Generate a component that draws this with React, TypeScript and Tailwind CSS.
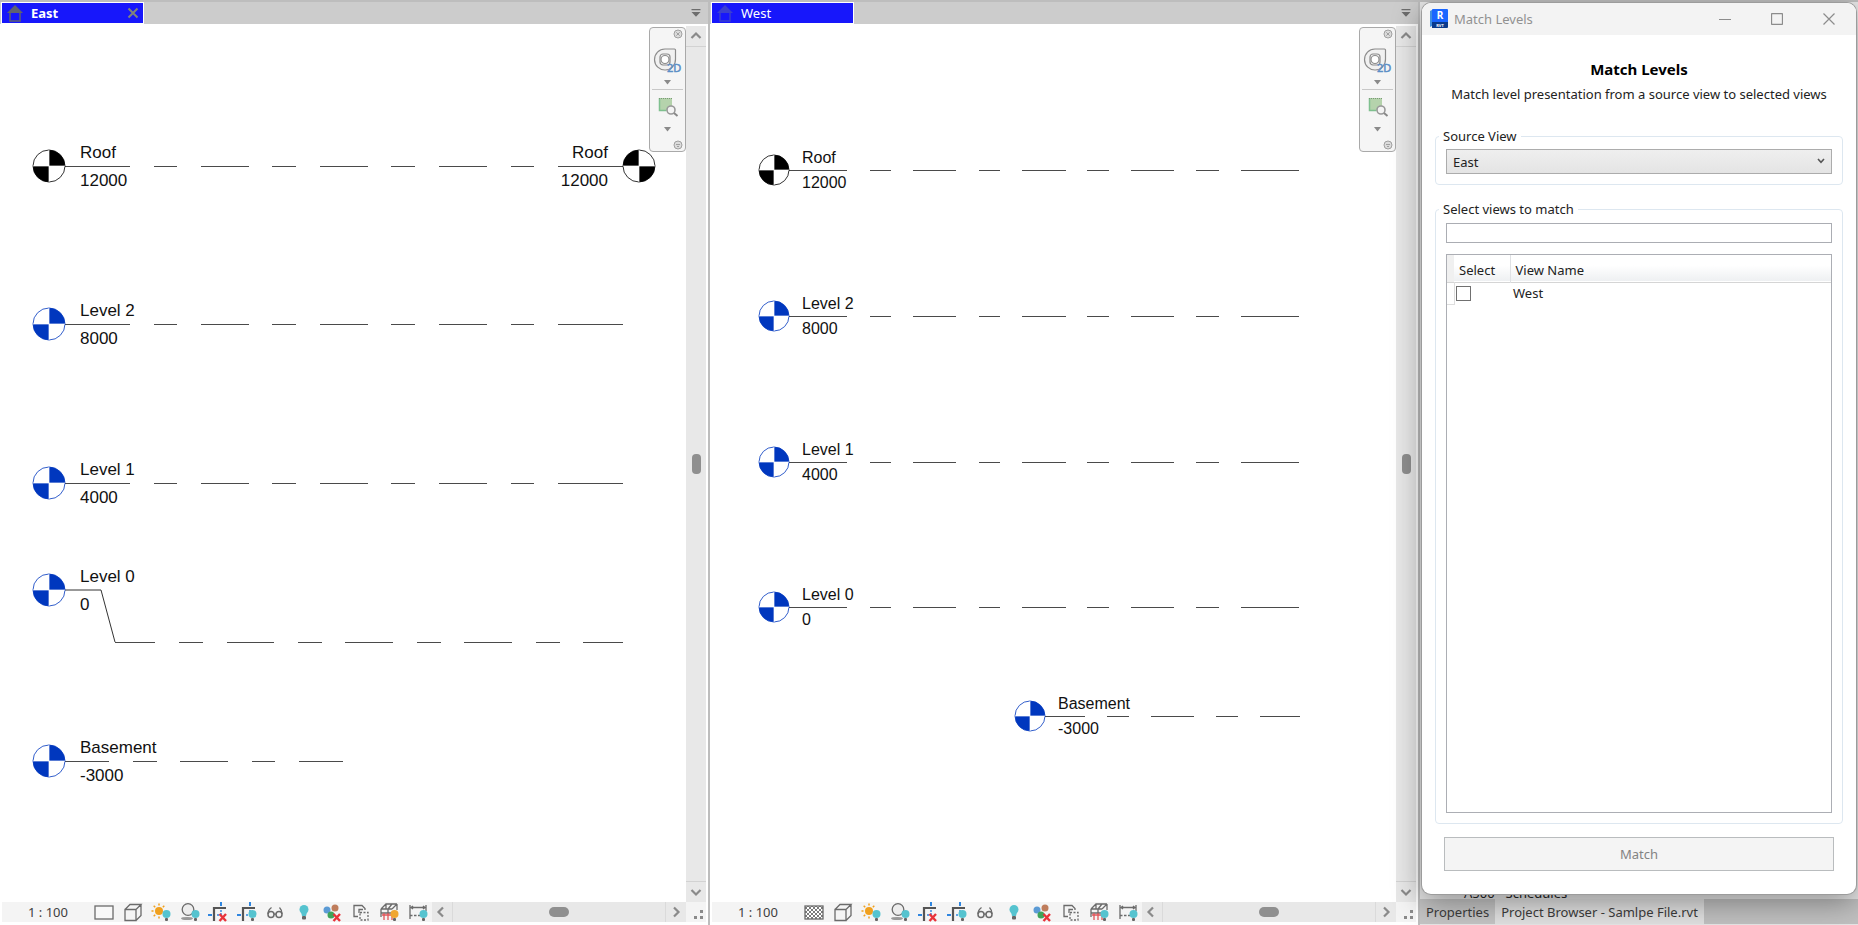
import { useState } from "react";
import type { ReactNode } from "react";

type Span = [number, number];

type Level = {
  name: string;
  elevation: string;
  x: number;
  y: number;
  dashes: Span[];
  lineY?: number;
  elbow?: string;
  color?: string;
  endHead?: number;
};

const LEVEL_BLUE = "#0037be";

const EAST_DASHES: Span[] = [
  [65, 130], [154, 177], [201, 249], [272, 296], [320, 368], [391, 415], [439, 487], [511, 534], [558, 623],
];

const WEST_DASHES: Span[] = [
  [79, 137], [160, 181], [203, 246], [269, 290], [312, 356], [377, 399], [421, 464], [486, 509], [531, 589],
];

const EAST_LEVELS: Level[] = [
  { name: "Roof", elevation: "12000", x: 49, y: 142, dashes: EAST_DASHES, color: "#000000", endHead: 639 },
  { name: "Level 2", elevation: "8000", x: 49, y: 300, dashes: EAST_DASHES },
  { name: "Level 1", elevation: "4000", x: 49, y: 459, dashes: EAST_DASHES },
  {
    name: "Level 0", elevation: "0", x: 49, y: 566, lineY: 618, elbow: "M65 566H101L115 618",
    dashes: [[115, 155], [179, 203], [227, 274], [298, 322], [345, 393], [417, 441], [464, 512], [536, 560], [583, 623]],
  },
  { name: "Basement", elevation: "-3000", x: 49, y: 737, dashes: [[65, 109], [133, 157], [180, 228], [252, 275], [299, 343]] },
];

const WEST_LEVELS: Level[] = [
  { name: "Roof", elevation: "12000", x: 64, y: 146, dashes: WEST_DASHES, color: "#000000" },
  { name: "Level 2", elevation: "8000", x: 64, y: 292, dashes: WEST_DASHES },
  { name: "Level 1", elevation: "4000", x: 64, y: 438, dashes: WEST_DASHES },
  { name: "Level 0", elevation: "0", x: 64, y: 583, dashes: WEST_DASHES },
  { name: "Basement", elevation: "-3000", x: 320, y: 692, dashes: [[335, 375], [397, 419], [441, 484], [506, 528], [550, 590]] },
];

function LevelHead({ x, y, r, color, flip }: { x: number; y: number; r: number; color: string; flip?: boolean }) {
  return (
    <g transform={`translate(${x} ${y})${flip ? " scale(-1 1)" : ""}`}>
      <circle r={r} fill="#fff" stroke={color} strokeWidth="1" strokeOpacity="0.8" />
      <path d={`M0 0V${-r}A${r} ${r} 0 0 1 ${r} 0ZM0 0V${r}A${r} ${r} 0 0 1 ${-r} 0Z`} fill={color} />
      <path d={`M0 ${-r}V${r}M${-r} 0H${r}`} stroke="#fff" strokeOpacity="0.7" strokeWidth="1" />
    </g>
  );
}

function LevelDrawing({ levels, r, textClass, above, below, indent }: {
  levels: Level[]; r: number; textClass: string; above: number; below: number; indent: number;
}) {
  return (
    <svg className={`block h-full w-full font-['Liberation_Sans',sans-serif] ${textClass}`} fill="#111">
      {levels.map((l) => (
        <g key={l.name}>
          {l.elbow && <path d={l.elbow} fill="none" stroke="#333" strokeWidth="1" />}
          <path
            d={l.dashes.map(([a, b]) => `M${a} ${(l.lineY ?? l.y) + 0.5}H${b}`).join("")}
            stroke="#4a4a4a"
            strokeWidth="1"
          />
          <LevelHead x={l.x} y={l.y} r={r} color={l.color ?? LEVEL_BLUE} />
          <text x={l.x + indent} y={l.y - above}>{l.name}</text>
          <text x={l.x + indent} y={l.y + below}>{l.elevation}</text>
          {l.endHead && (
            <>
              <LevelHead x={l.endHead} y={l.y} r={r} color={l.color ?? LEVEL_BLUE} flip />
              <text x={l.endHead - indent} y={l.y - above} textAnchor="end">{l.name}</text>
              <text x={l.endHead - indent} y={l.y + below} textAnchor="end">{l.elevation}</text>
            </>
          )}
        </g>
      ))}
    </svg>
  );
}

/* ---------- view control bar icons, all on a 20x20 grid ---------- */

function Bulb({ color = "#55c3cf" }: { color?: string }) {
  return (
    <g stroke="none">
      <circle cx="15.5" cy="12" r="4" fill={color} />
      <rect x="14" y="16" width="3" height="3" rx="1" fill="#666" />
    </g>
  );
}

function Cross() {
  return <path d="M11.5 12L18 19M18 12L11.5 19" stroke="#e8333a" strokeWidth="2.4" />;
}

function Glyph({ children }: { children: ReactNode }) {
  return (
    <svg viewBox="0 0 20 20" className="block size-5" fill="none" stroke="#6b6b6b" strokeWidth="1.3">
      {children}
    </svg>
  );
}

function CropMark() {
  return (
    <>
      <path d="M13 0V4M0 13H4" stroke="#2f86e0" strokeWidth="2" />
      <path d="M6 19V6H18" stroke="#555" strokeWidth="2.2" />
      <path d="M9 13H14M13 8V12" stroke="#2f86e0" strokeWidth="1.4" strokeDasharray="2 1" />
    </>
  );
}

function viewTools(east: boolean): { label: string; glyph: ReactNode }[] {
  return [
    {
      label: "Detail level",
      glyph: east ? (
        <rect x="1" y="4" width="18" height="13" fill="#f8f8f8" />
      ) : (
        <>
          <rect x="1" y="4" width="18" height="13" fill="#fff" />
          <path d="M1 7L4 4M1 11L8 4M1 15L12 4M3 17L16 4M7 17L19 5M11 17L19 9M15 17L19 13M16 4L19 7M12 4L19 11M8 4L19 15M4 4L17 17M1 5L13 17M1 9L9 17M1 13L5 17" strokeWidth="0.9" />
        </>
      ),
    },
    { label: "Visual style", glyph: <path d="M2 7.5H13V18.5H2ZM2 7.5L7 2.5H18L13 7.5M18 2.5V13.5L13 18.5" /> },
    {
      label: "Sun path",
      glyph: (
        <>
          <circle cx="8" cy="9" r="4" fill="#f0a01e" stroke="none" />
          <path d="M8 1.5V3.5M8 14.5V16.5M0.5 9H2.5M2.7 3.7L4.2 5.2M13.3 3.7L11.8 5.2M2.7 14.3L4.2 12.8" stroke="#f0a01e" strokeWidth="1.5" />
          <Bulb />
        </>
      ),
    },
    {
      label: "Shadows",
      glyph: (
        <>
          <ellipse cx="7" cy="16.5" rx="6" ry="1.6" fill="#999" stroke="none" />
          <circle cx="8" cy="7.5" r="5.8" fill="#ededed" />
          <Bulb />
        </>
      ),
    },
    { label: "Crop view", glyph: <><CropMark /><Cross /></> },
    { label: "Show crop region", glyph: <><CropMark /><Bulb /></> },
    {
      label: "Temporary hide",
      glyph: (
        <>
          <circle cx="6" cy="12.5" r="3" strokeWidth="1.5" />
          <circle cx="14" cy="12.5" r="3" strokeWidth="1.5" />
          <path d="M9 12.5Q10 11.5 11 12.5M3 12Q3 8 6.5 5.5M17 12Q17 8 14.5 5.5" />
        </>
      ),
    },
    {
      label: "Reveal hidden elements",
      glyph: (
        <g stroke="none">
          <circle cx="10" cy="7.5" r="4.5" fill="#55c3cf" />
          <path d="M7 10H13L12 14H8Z" fill="#55c3cf" />
          <rect x="8" y="14" width="4" height="3.5" rx="1" fill="#666" />
        </g>
      ),
    },
    {
      label: "Worksharing display",
      glyph: (
        <>
          <g stroke="none">
            <circle cx="5" cy="8" r="3.5" fill="#5b9bd5" />
            <circle cx="13" cy="6" r="3.5" fill="#bf7d5c" />
            <circle cx="9" cy="13" r="3.5" fill="#3fa45b" />
          </g>
          <Cross />
        </>
      ),
    },
    {
      label: "Temporary view properties",
      glyph: (
        <>
          <path d="M7 14.5H3V3.5H11L14 6.5V8" />
          <path d="M8 11V7.5H12" />
          <path d="M9 10.5H17V18H9Z" strokeDasharray="2 1.5" />
        </>
      ),
    },
    {
      label: "Analytical model",
      glyph: (
        <>
          <path d="M2 7L7 2H18M2 7V15M2 7H13M7 2V7M13 2L9 7V12M18 2V8M2 11H13M13 7L18 2" />
          <path d="M5 18V11M9 18V11M13 18V11M3 13H13" stroke="#e0565a" />
          <Bulb color={east ? "#f0a630" : "#55c3cf"} />
        </>
      ),
    },
    {
      label: "Constraints",
      glyph: (
        <>
          <path d="M2 3V17M18 3V9M3 5.5H17M5 4L3 5.5L5 7M15 4L17 5.5L15 7" />
          <path d="M2 13.5H12" strokeDasharray="2.5 1.5" />
          <Bulb />
        </>
      ),
    },
  ];
}

function Chevron({ d }: { d: string }) {
  return (
    <svg viewBox="0 0 20 20" className="block size-5" fill="none" stroke="#8a8a8a" strokeWidth="2.2">
      <path d={d} />
    </svg>
  );
}

function DropCaret() {
  return (
    <svg viewBox="0 0 7 5" className="block h-[5px] w-[7px]" fill="#8a8a8a">
      <path d="M0 0H7L3.5 4.5Z" />
    </svg>
  );
}

function NavigationBar() {
  return (
    <div className="absolute right-0 top-[3px] flex h-[125px] w-[37px] flex-col items-center rounded-[4px] border border-[#a9a9a9] bg-[#f5f5f5] px-[2px] py-px">
      <button aria-label="Close navigation bar" className="self-end">
        <svg viewBox="0 0 10 10" className="block size-[10px]" fill="#dcdcdc" stroke="#a0a0a0">
          <circle cx="5" cy="5" r="4" />
          <path d="M3.3 3.3L6.7 6.7M6.7 3.3L3.3 6.7" />
        </svg>
      </button>
      <button aria-label="2D steering wheel" className="mt-[7px]">
        <svg viewBox="0 0 32 30" className="block h-[30px] w-8" fill="none" stroke="#8c8c8c" strokeWidth="1.2">
          <path d="M13 3H22.5Q23.5 3 23.5 4V13A10.5 10.5 0 1 1 13 3Z" fill="#f1f1f1" />
          <rect x="8" y="8" width="10" height="11" rx="3" />
          <circle cx="13" cy="13.5" r="4" fill="#fff" />
          <text x="15" y="26" fontSize="11" fill="#5c8fc6" stroke="#5c8fc6" strokeWidth="0.5" className="font-['Noto_Sans',sans-serif]">2D</text>
        </svg>
      </button>
      <button aria-label="Wheel options" className="mt-1"><DropCaret /></button>
      <hr className="mt-[4px] w-full border-[#c8c8c8]" />
      <button aria-label="Zoom in region" className="mt-[6px]">
        <svg viewBox="0 0 22 22" className="block size-[22px]">
          <rect x="2" y="2" width="13" height="13" fill="#b5d3ac" />
          <path d="M2.5 2V14.5H9" fill="none" stroke="#7fc08f" strokeWidth="1.5" />
          <path d="M2 2.5H15" stroke="#7a9a76" strokeDasharray="1 1" />
          <circle cx="14" cy="14" r="4" fill="#f4f4f4" stroke="#999" strokeWidth="1.6" />
          <path d="M17 17L20.5 20" stroke="#888" strokeWidth="2" />
        </svg>
      </button>
      <button aria-label="Zoom options" className="mt-[9px]"><DropCaret /></button>
      <button aria-label="Customize navigation bar" className="mt-auto self-end">
        <svg viewBox="0 0 10 10" className="block size-[10px]" fill="#dcdcdc" stroke="#a0a0a0">
          <circle cx="5" cy="5" r="4" />
          <path d="M3 4.5H7M4 6.5H6" />
        </svg>
      </button>
    </div>
  );
}

function ViewPane({ title, active, children }: { title: string; active?: boolean; children: ReactNode }) {
  return (
    <section className="flex min-w-0 flex-col border-r-2 border-[#bdbdbd] bg-white pb-[3px]">
      <div className="flex h-6 items-stretch border-t-2 border-[#bdbdbd] bg-[#cccccc] pl-px pr-[3px]">
        <div className={`flex w-[143px] items-center border border-white bg-[#1717fb] px-1 text-[13px] leading-4 text-white ${active ? "font-bold" : ""}`}>
          <svg viewBox="0 0 18 18" className={`size-[18px] ${active ? "text-[#5f6270]" : "text-[#3a3fd0]"}`} stroke="currentColor" fill="none">
            <path d="M1 9L9 1L17 9Z" fill="currentColor" stroke="none" />
            <path d="M4 9V17H14V9" strokeWidth="1.5" />
          </svg>
          <span className="ml-[7px] flex-1">{title}</span>
          {active && (
            <button aria-label={`Close ${title}`}>
              <svg viewBox="0 0 12 12" className="block size-3" stroke="#80847c" strokeWidth="2">
                <path d="M1.5 1.5L10.5 10.5M10.5 1.5L1.5 10.5" />
              </svg>
            </button>
          )}
        </div>
        <button aria-label="Open views" className="ml-auto px-1">
          <svg viewBox="0 0 10 8" className="block h-2 w-[10px]" fill="#6d6d6d">
            <path d="M0.5 0H9.5V1.3H0.5ZM0.5 3H9.5L5 7.7Z" />
          </svg>
        </button>
      </div>

      <div className="flex min-h-0 flex-1 pr-[2px]">
        <div className="relative min-w-0 flex-1">
          {children}
          <NavigationBar />
        </div>
        <div className="mt-[2px] flex w-5 flex-col justify-between bg-[#e8e8e8]">
          <button aria-label="Scroll up" className="border-b border-[#d2d2d2]"><Chevron d="M5.5 12L10 7.5L14.5 12" /></button>
          <div className="mx-auto h-5 w-[9px] rounded-[4px] bg-[#8f8f8f]" />
          <button aria-label="Scroll down" className="border-t border-[#d2d2d2]"><Chevron d="M5.5 8L10 12.5L14.5 8" /></button>
        </div>
      </div>

      <div className="mx-[2px] flex h-5 items-center bg-[#f4f4f4]">
        <button className="w-[92px] pl-[26px] text-left text-[13px] leading-5 text-[#404040]">1 : 100</button>
        <div className="flex w-[334px] justify-between">
          {viewTools(!!active).map((t) => (
            <button key={t.label} aria-label={t.label}><Glyph>{t.glyph}</Glyph></button>
          ))}
        </div>
        <div className="ml-[4px] flex h-5 flex-1 items-center justify-between bg-[#e8e8e8]">
          <button aria-label="Scroll left" className="border-r border-[#dadada]"><Chevron d="M11 5.5L6.5 10L11 14.5" /></button>
          <div className="h-[10px] w-5 rounded-[5px] bg-[#8f8f8f]" />
          <button aria-label="Scroll right" className="border-l border-[#dadada]"><Chevron d="M8 5.5L12.5 10L8 14.5" /></button>
        </div>
        <svg viewBox="0 0 20 20" className="size-5" fill="#8a8a8a">
          <path d="M14 8H17V11H14ZM14 14H17V17H14ZM8 14H11V17H8Z" />
        </svg>
      </div>
    </section>
  );
}

function RevitLogo() {
  return (
    <svg viewBox="0 0 18 20" className="h-5 w-[18px]">
      <path d="M0 2L4 0V16L0 18Z" fill="#3f8fe0" />
      <rect x="2" y="0" width="16" height="14" rx="1" fill="#1a66ff" />
      <path d="M2 13H18V18Q18 19 17 19H2Z" fill="#0a3a8c" />
      <text x="10" y="10" textAnchor="middle" fontSize="10" fontWeight="700" fill="#fff">R</text>
      <text x="10" y="18" textAnchor="middle" fontSize="4" fontWeight="700" fill="#fff">RVT</text>
    </svg>
  );
}

function MatchLevelsDialog() {
  const [source, setSource] = useState("East");
  const [search, setSearch] = useState("");

  return (
    <div role="dialog" aria-labelledby="dialog-title" className="absolute bottom-[31px] left-[2px] right-[2px] top-px flex flex-col overflow-hidden rounded-[9px] bg-white text-[13px] leading-5 text-[#222] shadow-[0_0_0_1px_#9c9c9c,0_8px_30px_rgba(0,0,0,0.38)]">
      <header className="flex h-8 shrink-0 items-center bg-[#f3f3f3] pl-2 pr-px text-[#919191]">
        <RevitLogo />
        <span className="ml-[6px] flex-1">Match Levels</span>
        <button aria-label="Minimize" className="flex w-[52px] justify-center">
          <svg viewBox="0 0 12 12" className="size-3" stroke="#8c8c8c"><path d="M0 6.5H12" /></svg>
        </button>
        <button aria-label="Maximize" className="flex w-[52px] justify-center">
          <svg viewBox="0 0 12 12" className="size-3" fill="none" stroke="#8c8c8c"><rect x="0.5" y="0.5" width="11" height="11" rx="1" strokeWidth="1.3" /></svg>
        </button>
        <button aria-label="Close" className="flex w-[52px] justify-center">
          <svg viewBox="0 0 12 12" className="size-3" stroke="#8c8c8c" strokeWidth="1.2"><path d="M0.5 0.5L11.5 11.5M11.5 0.5L0.5 11.5" /></svg>
        </button>
      </header>

      <div className="flex min-h-0 flex-1 flex-col px-[13px] pb-[23px] pt-[22px]">
        <h1 id="dialog-title" className="text-center text-[15px] font-bold leading-6 text-black">Match Levels</h1>
        <p className="mt-[3px] text-center">Match level presentation from a source view to selected views</p>

        <fieldset className="mt-[22px] rounded-[4px] border border-[#dde7f0] px-[10px] pb-[10px] pt-[3px]">
          <legend className="-ml-[7px] px-1">Source View</legend>
          <div className="relative">
            <select
              aria-label="Source View"
              value={source}
              onChange={(e) => setSource(e.target.value)}
              className="block h-[25px] w-full appearance-none border border-[#acacac] bg-linear-to-b from-[#efefef] to-[#e4e4e4] pl-[6px] text-[13px] leading-5"
            >
              <option>East</option>
              <option>West</option>
            </select>
            <svg viewBox="0 0 8 6" className="pointer-events-none absolute right-[7px] top-[9px] h-[6px] w-2" fill="none" stroke="#555" strokeWidth="1.6">
              <path d="M1 1L4 4.3L7 1" />
            </svg>
          </div>
        </fieldset>

        <fieldset className="mt-[14px] flex min-h-0 flex-1 flex-col rounded-[4px] border border-[#dde7f0] px-[10px] pb-[10px] pt-1">
          <legend className="-ml-[7px] px-1">Select views to match</legend>
          <input
            type="text"
            aria-label="Filter views"
            value={search}
            onChange={(e) => setSearch(e.target.value)}
            className="block h-5 w-full shrink-0 border border-[#abadb3] px-1"
          />
          <div className="mt-[11px] min-h-0 flex-1 border border-[#acaeb4]">
            <table className="w-full table-fixed border-collapse text-left">
              <thead>
                <tr className="h-[27px] border-b border-[#d5d5d5] bg-linear-to-b from-white from-40% to-[#eef0f2]">
                  <th aria-label="Row" className="w-[7px] bg-[#f0f0f0]" />
                  <th className="w-[56px] border-r border-[#dfe1e4] pl-[5px] pt-1 font-normal">Select</th>
                  <th className="pl-[5px] pt-1 font-normal">View Name</th>
                </tr>
              </thead>
              <tbody>
                {["West"].filter((v) => v.toLowerCase().includes(search.toLowerCase())).map((v) => (
                  <tr key={v} className="h-[22px]">
                    <td className="border-b border-r border-[#dedede]" />
                    <td className="pl-px">
                      <input type="checkbox" aria-label={v} className="block size-[15px] appearance-none border border-[#707070] bg-white checked:bg-[#1a66ff]" />
                    </td>
                    <td className="pl-[3px]">{v}</td>
                  </tr>
                ))}
              </tbody>
            </table>
          </div>
        </fieldset>

        <button disabled className="mx-[9px] mt-[13px] h-[34px] shrink-0 border border-[#b9bcbe] bg-[#f4f4f4] text-[#838383]">
          Match
        </button>
      </div>
    </div>
  );
}

export default function App() {
  return (
    <main className="grid h-screen grid-cols-[1fr_1fr_438px] overflow-hidden bg-white font-['Noto_Sans','Open_Sans',sans-serif]">
      <ViewPane title="East" active>
        <LevelDrawing levels={EAST_LEVELS} r={16} textClass="text-[17px]" above={8} below={20} indent={31} />
      </ViewPane>
      <ViewPane title="West">
        <LevelDrawing levels={WEST_LEVELS} r={15} textClass="text-[16px]" above={7} below={18} indent={28} />
      </ViewPane>

      <aside className="relative z-10 flex flex-col border-t-2 border-[#bdbdbd] bg-[#e6e6e6] pb-px">
        <div className="flex flex-1 items-end pl-[44px] text-[13px] leading-3 text-[#222]">A500 - Schedules</div>
        <div className="flex h-[25px] bg-[#c0c0c0] text-[13px] leading-6 text-[#3c3c3c]">
          <button className="bg-[#c4c4c4] px-[6px]">Properties</button>
          <button className="bg-[#e0e0e0] px-[6px]">Project Browser - Samlpe File.rvt</button>
        </div>
        <MatchLevelsDialog />
      </aside>
    </main>
  );
}
